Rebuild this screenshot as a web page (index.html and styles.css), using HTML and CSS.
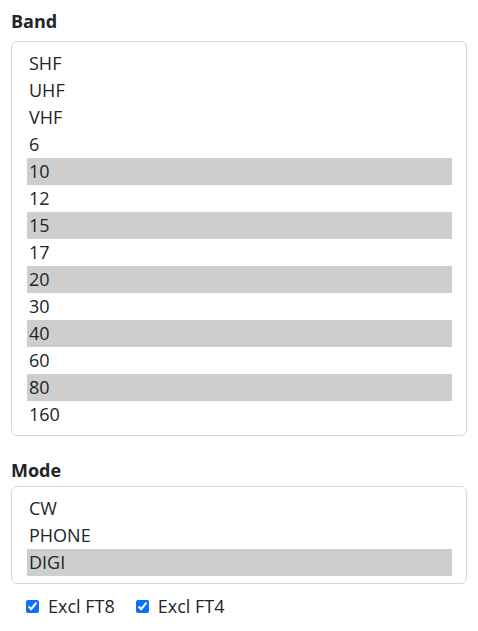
FILE: index.html
```
<!DOCTYPE html>
<html>
<head>
<meta charset="utf-8">
<link rel="stylesheet" href="styles.css">
</head>
<body>
<div class="panel">
  <div class="group band">
    <div class="label">Band</div>
    <div class="listbox">
      <div class="opt">SHF</div>
      <div class="opt">UHF</div>
      <div class="opt">VHF</div>
      <div class="opt">6</div>
      <div class="opt sel">10</div>
      <div class="opt">12</div>
      <div class="opt sel">15</div>
      <div class="opt">17</div>
      <div class="opt sel">20</div>
      <div class="opt">30</div>
      <div class="opt sel">40</div>
      <div class="opt">60</div>
      <div class="opt sel">80</div>
      <div class="opt">160</div>
    </div>
  </div>
  <div class="group mode">
    <div class="label">Mode</div>
    <div class="listbox">
      <div class="opt">CW</div>
      <div class="opt">PHONE</div>
      <div class="opt sel">DIGI</div>
    </div>
  </div>
  <div class="checks">
    <label class="check"><input type="checkbox" checked><span>Excl FT8</span></label>
    <label class="check"><input type="checkbox" checked><span>Excl FT4</span></label>
  </div>
</div>
</body>
</html>
```
FILE: styles.css
```
html, body {
  margin: 0;
  padding: 0;
  background: #fff;
}
body {
  font-family: "Open Sans", "Noto Sans", sans-serif;
  color: #212529;
}
.panel {
  padding: 8px 11px 0 11px;
}
.label {
  font-size: 18px;
  font-weight: 700;
  line-height: 27px;
}
.band .label {
  margin-bottom: 6px;
}
.group.mode {
  margin-top: 21px;
}
.mode .label {
  margin-bottom: 2px;
}
.listbox {
  border: 1px solid #d3d6da;
  border-radius: 6px;
  padding: 8px 14px 7px 15px;
}
.opt {
  font-size: 18px;
  line-height: 27px;
  height: 27px;
  padding-left: 2px;
  white-space: nowrap;
}
.opt.sel {
  background: #cecece;
}
.checks {
  display: flex;
  gap: 17px;
  padding-left: 11px;
  margin-top: 10px;
}
.check {
  display: flex;
  align-items: center;
  font-size: 18px;
  line-height: 24px;
}
.check input {
  width: 13px;
  height: 13px;
  margin: 1px 9px 0 4px;
  accent-color: #0d6efd;
}
```
